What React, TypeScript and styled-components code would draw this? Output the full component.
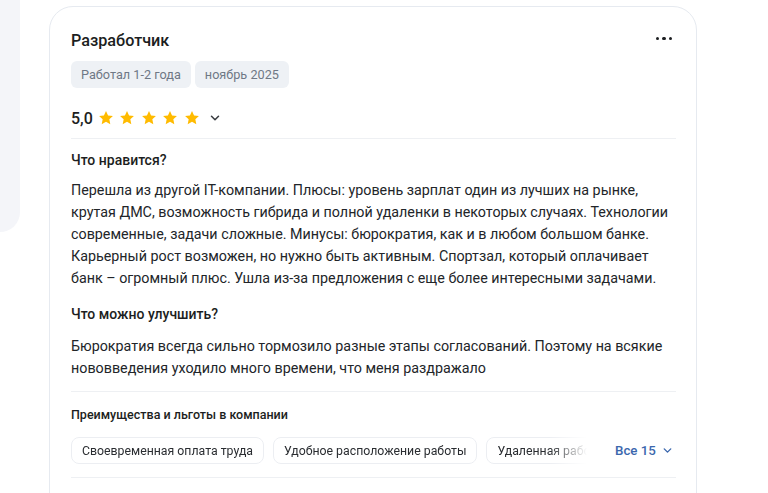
import React from "react";
import styled, { createGlobalStyle } from "styled-components";

const Global = createGlobalStyle`
  html, body { margin: 0; padding: 0; background: #ffffff; }
  body { font-family: Roboto, "Noto Sans", Arial, sans-serif; color: #1f2226; }
  * { box-sizing: border-box; }
`;

const Page = styled.div`
  display: flex;
  align-items: flex-start;
  gap: 29px;
  width: 768px;
  height: 493px;
  overflow: hidden;
`;

const SidePanel = styled.div`
  flex: 0 0 20px;
  height: 232px;
  background: #f4f5f9;
  border-bottom-right-radius: 20px;
`;

const Card = styled.div`
  flex: 0 0 648px;
  margin-top: 6px;
  min-height: 520px;
  border: 1px solid #e6eaf0;
  border-radius: 24px;
  padding: 22px 20px 0 21px;
  background: #fff;
`;

const Header = styled.div`
  display: flex;
  justify-content: space-between;
  align-items: center;
`;

const Title = styled.div`
  font-size: 16.2px;
  line-height: 24px;
  font-weight: 500;
  color: #1c1e21;
`;

const MoreButton = styled.div`
  display: flex;
  gap: 3px;
  margin-right: 4px;
  margin-top: -5px;
`;

const Dot = styled.span`
  width: 3.5px;
  height: 3.5px;
  border-radius: 50%;
  background: #1c1e21;
`;

const TagRow = styled.div`
  display: flex;
  gap: 4px;
  margin-top: 8px;
`;

const Tag = styled.div`
  height: 27px;
  padding: 0 10px;
  display: flex;
  align-items: center;
  background: #eef1f5;
  border-radius: 6px;
  font-size: 12.7px;
  color: #6f7885;
`;

const RatingRow = styled.div`
  display: flex;
  align-items: center;
  height: 24px;
  margin-top: 18px;
`;

const Score = styled.span`
  font-size: 16px;
  font-weight: 500;
  color: #1c1e21;
  margin-right: 5px;
`;

const Stars = styled.div`
  display: flex;
  gap: 5.5px;
  margin-right: 8px;
`;

const Divider = styled.div<{ $top: number }>`
  height: 1px;
  background: #eef0f3;
  margin-top: ${(p) => p.$top}px;
`;

const Heading = styled.div<{ $top: number }>`
  font-size: 14px;
  line-height: 20px;
  font-weight: 500;
  color: #1c1e21;
  margin-top: ${(p) => p.$top}px;
`;

const Body = styled.p<{ $top: number }>`
  margin: ${(p) => p.$top}px 0 0;
  font-size: 14.3px;
  line-height: 22px;
  color: #222529;
`;

const SmallHeading = styled.div`
  font-size: 12.5px;
  line-height: 18px;
  font-weight: 500;
  color: #1c1e21;
  margin-top: 14px;
`;

const BenefitsRow = styled.div`
  display: flex;
  align-items: center;
  margin-top: 13px;
`;

const BenefitsTrack = styled.div`
  flex: 0 0 525px;
  display: flex;
  gap: 9px;
  overflow: hidden;
  -webkit-mask-image: linear-gradient(to right, #000 478px, transparent 516px);
  mask-image: linear-gradient(to right, #000 478px, transparent 516px);
`;

const Benefit = styled.div`
  flex: 0 0 auto;
  height: 27px;
  padding: 0 10px;
  display: flex;
  align-items: center;
  border: 1px solid #eceef2;
  border-radius: 8px;
  font-size: 12.3px;
  color: #2a2d31;
  white-space: nowrap;
`;

const ShowAll = styled.div`
  flex: none;
  display: flex;
  align-items: center;
  gap: 5px;
  margin-left: 19px;
  font-size: 13.3px;
  font-weight: 500;
  color: #3b67ad;
  white-space: nowrap;
`;

const Star = () => (
  <svg width="16" height="16" viewBox="0 0 24 24">
    <path
      d="M12 1.5l3.1 6.65 7.3.85-5.4 5 1.45 7.25L12 17.6l-6.45 3.65L7 14l-5.4-5 7.3-.85z"
      fill="#ffbb00"
    />
  </svg>
);

const Chevron = ({ color, size }: { color: string; size: number }) => (
  <svg width={size} height={size} viewBox="0 0 24 24" fill="none">
    <path d="M6 9l6 6 6-6" stroke={color} strokeWidth="2.6" strokeLinecap="round" strokeLinejoin="round" />
  </svg>
);

export default function App() {
  return (
    <>
      <Global />
      <Page>
        <SidePanel />
        <Card>
          <Header>
            <Title>Разработчик</Title>
            <MoreButton>
              <Dot />
              <Dot />
              <Dot />
            </MoreButton>
          </Header>
          <TagRow>
            <Tag>Работал 1-2 года</Tag>
            <Tag>ноябрь 2025</Tag>
          </TagRow>
          <RatingRow>
            <Score>5,0</Score>
            <Stars>
              <Star />
              <Star />
              <Star />
              <Star />
              <Star />
            </Stars>
            <Chevron color="#3a3d42" size={14} />
          </RatingRow>
          <Divider $top={8} />
          <Heading $top={11}>Что нравится?</Heading>
          <Body $top={9}>
            Перешла из другой IT-компании. Плюсы: уровень зарплат один из лучших на рынке, крутая ДМС,
            возможность гибрида и полной удаленки в некоторых случаях. Технологии современные, задачи
            сложные. Минусы: бюрократия, как и в любом большом банке. Карьерный рост возможен, но нужно быть
            активным. Спортзал, который оплачивает банк – огромный плюс. Ушла из-за предложения с еще более
            интересными задачами.
          </Body>
          <Heading $top={15}>Что можно улучшить?</Heading>
          <Body $top={11}>
            Бюрократия всегда сильно тормозило разные этапы согласований. Поэтому на всякие нововведения
            уходило много времени, что меня раздражало
          </Body>
          <Divider $top={12} />
          <SmallHeading>Преимущества и льготы в компании</SmallHeading>
          <BenefitsRow>
            <BenefitsTrack>
              <Benefit>Своевременная оплата труда</Benefit>
              <Benefit>Удобное расположение работы</Benefit>
              <Benefit>Удаленная работа</Benefit>
            </BenefitsTrack>
            <ShowAll>
              Все 15
              <Chevron color="#3b67ad" size={13} />
            </ShowAll>
          </BenefitsRow>
          <Divider $top={13} />
        </Card>
      </Page>
    </>
  );
}
